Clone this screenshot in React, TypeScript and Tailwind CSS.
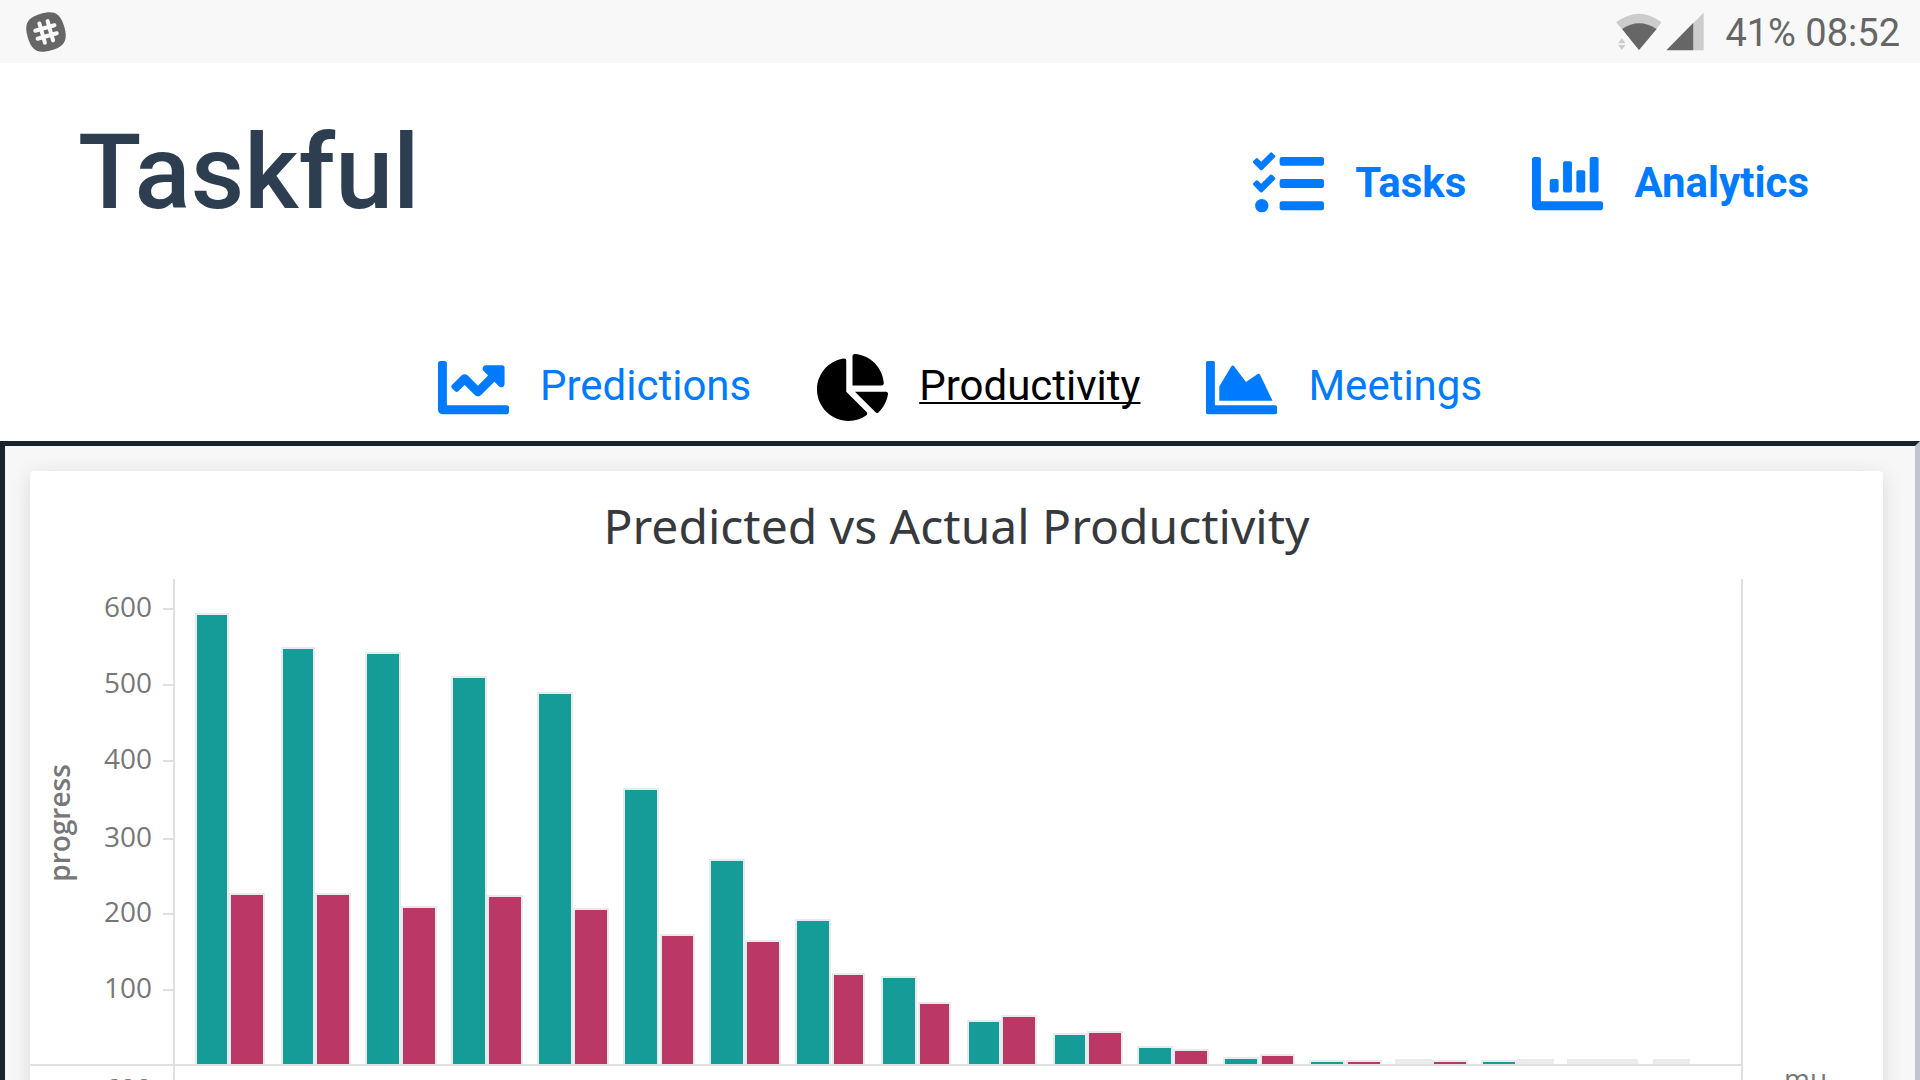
import { clsx } from "clsx";
import type { IconType } from "react-icons";
import { FaChartArea, FaChartBar, FaChartLine, FaChartPie, FaTasks } from "react-icons/fa";

type NavItem = { label: string; href: string; icon: IconType; active?: boolean };

// x, width, top of each bar in chart units
type Bar = [number, number, number];

const mainNav: NavItem[] = [
  { label: "Tasks", href: "#tasks", icon: FaTasks },
  { label: "Analytics", href: "#analytics", icon: FaChartBar },
];

const tabs: NavItem[] = [
  { label: "Predictions", href: "#predictions", icon: FaChartLine },
  { label: "Productivity", href: "#productivity", icon: FaChartPie, active: true },
  { label: "Meetings", href: "#meetings", icon: FaChartArea },
];

const BASELINE = 495;

const ticks = [
  { value: 600, y: 39 },
  { value: 500, y: 115 },
  { value: 400, y: 191 },
  { value: 300, y: 269 },
  { value: 200, y: 344 },
  { value: 100, y: 420 },
];

const predicted: Bar[] = [
  [167, 30, 45],
  [253, 30, 79],
  [337, 32, 84],
  [423, 32, 108],
  [509, 32, 124],
  [595, 32, 220],
  [681, 32, 291],
  [767, 32, 351],
  [853, 32, 408],
  [939, 30, 452],
  [1025, 30, 465],
  [1109, 32, 478],
  [1195, 32, 489],
  [1281, 32, 492],
  [1453, 32, 492],
];

const actual: Bar[] = [
  [201, 32, 325],
  [287, 32, 325],
  [373, 32, 338],
  [459, 32, 327],
  [545, 32, 340],
  [632, 31, 366],
  [717, 32, 372],
  [804, 29, 405],
  [890, 29, 434],
  [973, 32, 447],
  [1059, 32, 463],
  [1145, 32, 481],
  [1232, 31, 486],
  [1318, 32, 492],
  [1404, 32, 492],
];

// days with no progress only show the bar outline
const empty: Bar[] = [
  [1367, 33, 491],
  [1489, 33, 491],
  [1539, 33, 491],
  [1575, 31, 491],
  [1625, 33, 491],
];

function NavLink({ item, bold }: { item: NavItem; bold?: boolean }) {
  const Icon = item.icon;
  return (
    <a
      href={item.href}
      className={clsx("flex items-center gap-[31px]", item.active ? "text-black" : "text-[#007bff]")}
    >
      <Icon className="size-[71px]" aria-hidden="true" />
      <span
        className={clsx(
          "text-[42px] leading-[48px]",
          bold ? "pb-0.5 font-bold" : "pb-1",
          item.active && "underline decoration-2 underline-offset-2 [text-decoration-skip-ink:none]",
        )}
      >
        {item.label}
      </span>
    </a>
  );
}

function StatusBar() {
  return (
    <div className="flex h-[63px] items-center justify-between bg-[#f8f8f8] pl-[25px] pr-5 text-[#666]">
      <svg viewBox="0 0 42 42" className="size-[42px]" aria-label="Slack">
        <g transform="rotate(-16 21 21)">
          <path
            fill="#666"
            d="M21 2C35 2 40 7 40 21S35 40 21 40 2 35 2 21 7 2 21 2Z"
          />
          <path
            stroke="#f8f8f8"
            strokeWidth="4"
            strokeLinecap="round"
            d="M17 11v20M25.500 11v20M11 16.800h20M11 25.200h20"
          />
        </g>
      </svg>
      <div className="flex items-center gap-[21px]">
        <svg viewBox="170 36 264 120" className="h-10 w-[88px]" aria-label="Signal">
          <path fill="#ccc" d="M171 67Q239 16 306 67L239 150Z" />
          <path fill="#f8f8f8" d="M171 100L189 84L236 150L200 156H171Z" />
          <path fill="#ccc" d="M171 67L189 87H291L306 67L291 60H186Z" />
          <path fill="#666" d="M188 87Q239 52 292 87L239 150Z" />
          <path fill="#ccc" d="M176 130L187.500 115L199 130ZM176 135H199L187.500 150Z" />
          <path fill="#ccc" d="M402 69L433 38V151H402Z" />
          <path fill="#666" d="M321 151L402 68V151Z" />
        </svg>
        <span className="pt-0.5 text-[38px] leading-[44px]">41% 08:52</span>
      </div>
    </div>
  );
}

function Bars({ bars, color }: { bars: Bar[]; color: string }) {
  return (
    <>
      {bars.map(([x, width, top]) => (
        <g key={x}>
          <rect x={x - 2} y={top - 2} width={width + 4} height={BASELINE + 1 - top} fill="#e7ebeb" />
          <rect x={x} y={top} width={width} height={BASELINE - 1 - top} fill={color} />
        </g>
      ))}
    </>
  );
}

function ProductivityChart() {
  return (
    <svg
      viewBox="0 0 1853 640"
      className="block w-full font-['Open_Sans','Noto_Sans',sans-serif]"
      role="img"
      aria-label="Predicted vs Actual Productivity"
    >
      <g fill="#777" fontSize="28" textAnchor="end">
        {ticks.map((t) => (
          <text key={t.value} x="122" y={t.y + 8}>
            {t.value}
          </text>
        ))}
        {/* first label of the next facet */}
        <text x="122" y="529">
          600
        </text>
      </g>
      <text fill="#777" fontSize="28" fontWeight="600" textAnchor="middle" transform="translate(40 253) rotate(-90)">
        progress
      </text>
      <text fill="#777" fontSize="28" x="1754" y="519">
        mu
      </text>

      <Bars bars={predicted} color="#169c98" />
      <Bars bars={actual} color="#ba3766" />
      {empty.map(([x, width, top]) => (
        <rect key={x} x={x - 2} y={top - 2} width={width + 4} height="5" fill="#ebebeb" />
      ))}

      <g stroke="#e0e0e0" strokeWidth="2">
        {ticks.map((t) => (
          <line key={t.value} x1="133" x2="143" y1={t.y} y2={t.y} />
        ))}
        <line x1="144" x2="144" y1="9" y2="640" />
        <line x1="1712" x2="1712" y1="9" y2="640" />
        <line x1="0" x2="1712" y1={BASELINE} y2={BASELINE} />
      </g>
    </svg>
  );
}

export default function App() {
  return (
    <div className="flex h-screen flex-col overflow-hidden bg-white font-[Roboto,sans-serif]">
      <StatusBar />
      <header className="flex items-start justify-between pl-[78px] pr-[111px] pt-[58px]">
        <h1 className="text-[104px] font-medium leading-[104px] text-[#2c3e50]">Taskful</h1>
        <nav className="flex gap-[66px] pt-[27px]">
          {mainNav.map((item) => (
            <NavLink key={item.label} item={item} bold />
          ))}
        </nav>
      </header>
      <nav className="flex justify-center gap-[66px] pb-[18px] pt-[127px]">
        {tabs.map((item) => (
          <NavLink key={item.label} item={item} />
        ))}
      </nav>
      <main className="min-h-0 flex-1 overflow-hidden border-x-[5px] border-t-[5px] border-l-[#1a242d] border-r-[#c0c5cc] border-t-[#1a242d] bg-[#f7f7f7] pl-[25px] pr-8 pt-[25px]">
        <section className="rounded bg-white shadow-[0_4px_20px_rgba(0,0,0,0.12)]">
          <h2 className="pb-[15px] pt-[26px] text-center font-['Noto_Sans','Open_Sans',sans-serif] text-[48px] leading-[58px] text-[#373a3c]">
            Predicted vs Actual Productivity
          </h2>
          <ProductivityChart />
        </section>
      </main>
    </div>
  );
}
